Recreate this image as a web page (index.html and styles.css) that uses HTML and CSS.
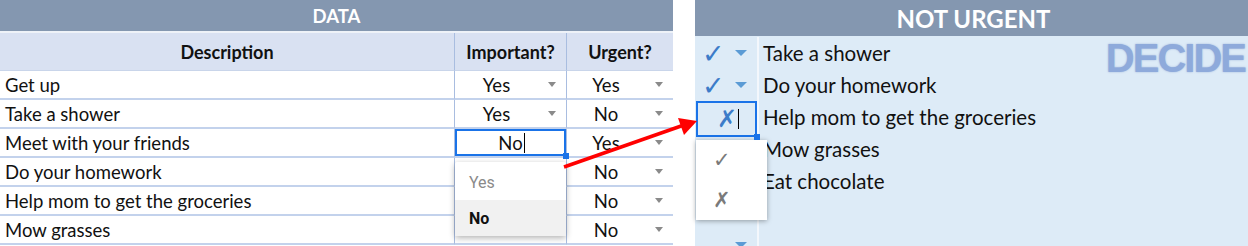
FILE: index.html
```html
<!DOCTYPE html>
<html lang="en">
<head>
  <meta charset="UTF-8">
  <title>Eisenhower matrix - data entry</title>
  <meta name="viewport" content="width=device-width, initial-scale=1.0">
  <link rel="stylesheet" href="styles.css">
</head>
<body>
  <div class="page">
    <section class="sheet">
      <div class="sheet-title">DATA</div>
      <div class="grid">
        <div class="head">Description</div>
        <div class="head">Important?</div>
        <div class="head">Urgent?</div>

        <div class="desc">Get up</div>
        <div class="pick"><span class="val">Yes</span><i class="tri"></i></div>
        <div class="pick"><span class="val">Yes</span><i class="tri"></i></div>

        <div class="desc">Take a shower</div>
        <div class="pick"><span class="val">Yes</span><i class="tri"></i></div>
        <div class="pick"><span class="val">No</span><i class="tri"></i></div>

        <div class="desc">Meet with your friends</div>
        <div class="pick editing">
          <span>No</span><span class="caret"></span>
          <div class="menu">
            <div class="muted">Yes</div>
            <div class="active">No</div>
          </div>
        </div>
        <div class="pick"><span class="val">Yes</span><i class="tri"></i></div>

        <!-- important cells below are hidden under the open menu -->
        <div class="desc">Do your homework</div>
        <div class="pick"></div>
        <div class="pick"><span class="val">No</span><i class="tri"></i></div>

        <div class="desc">Help mom to get the groceries</div>
        <div class="pick"></div>
        <div class="pick"><span class="val">No</span><i class="tri"></i></div>

        <div class="desc">Mow grasses</div>
        <div class="pick"></div>
        <div class="pick"><span class="val">No</span><i class="tri"></i></div>
      </div>
    </section>

    <section class="board">
      <div class="board-title">NOT URGENT</div>
      <div class="board-body">
        <div class="stamp">DECIDE</div>

        <div class="mark"><span class="glyph">✓</span><i class="tri"></i></div>
        <div class="item">Take a shower</div>

        <div class="mark"><span class="glyph">✓</span><i class="tri"></i></div>
        <div class="item">Do your homework</div>

        <div class="mark editing">
          <div class="editor"><span>✗</span><span class="caret"></span></div>
          <div class="menu">
            <div>✓</div>
            <div>✗</div>
          </div>
        </div>
        <div class="item">Help mom to get the groceries</div>

        <div class="mark"></div>
        <div class="item">Mow grasses</div>

        <div class="mark"></div>
        <div class="item">Eat chocolate</div>

        <div class="mark"></div>
        <div class="item"></div>

        <div class="mark"><span class="glyph"></span><i class="tri"></i></div>
        <div class="item"></div>
      </div>
    </section>

    <svg class="pointer" width="1248" height="246" viewBox="0 0 1248 246">
      <line x1="564" y1="167" x2="684" y2="125" stroke="#ff0000" stroke-width="3.5"/>
      <polygon points="697,121 678,118 684,135" fill="#ff0000"/>
    </svg>
  </div>
</body>
</html>
```

FILE: styles.css
```css
:root {
  --head: #8497b0;
  --band: #d9e1f2;
  --line: #c3d2ec;
  --col: #a9bde0;
  --board: #ddebf7;
  --edit: #1a73e8;
  --mark: #3c7cc9;
}

body {
  margin: 0;
  font-family: Lato, "Open Sans", sans-serif;
  color: #111;
  background: #fff;
}
.page {
  display: flex;
  gap: 22px;
  height: 246px;
  overflow: hidden;
  position: relative;
}

/* left: data sheet */
.sheet {
  width: 673px;
}
.sheet-title {
  height: 31px;
  background: var(--head); color: #fff;
  border-bottom: 2px solid #eef2f8;
  font-weight: 700;
  font-size: 18.5px;
  display: flex;
  align-items: center;
  justify-content: center;
}
.grid {
  display: grid;
  grid-template-columns: 454px 112px 107px;
}
.grid > div {
  box-sizing: border-box;
  height: 29px;
  border-bottom: 2px solid var(--line);
  display: flex;
  align-items: center;
  font-size: 18.5px;
}
.grid > .head {
  height: 38px;
  background: var(--band);
  border-bottom: 1px solid #c9d5ea;
  font-weight: 700;
  font-size: 18px;
  justify-content: center;
}
.grid > .head + .head,
.pick {
  border-left: 1px solid var(--col);
}
.desc {
  padding-left: 5px;
}
.pick .val {
  flex: 1;
  text-align: center;
  padding-right: 10px;
}
.tri {
  width: 0; height: 0;
  border-left: 4px solid transparent;
  border-right: 4px solid transparent;
  border-top: 5px solid #8a8a8a;
  margin-right: 10px;
}
.caret {
  width: 0;
  height: 20px;
  border-left: 1.5px solid #000;
  margin-left: 1px;
}
.pick.editing {
  position: relative;
  justify-content: center;
  box-shadow: inset 0 0 0 2px var(--edit);
  padding-left: 2px;
}
.editing::after {
  content: "";
  position: absolute;
  right: -3px; bottom: -3px;
  width: 6px; height: 6px;
  background: var(--edit);
  z-index: 6;
}
.pick .menu {
  position: absolute;
  top: 33px; left: 0;
  width: 111px;
  padding-top: 2px;
  background: #fff;
  border-radius: 2px;
  box-shadow: 0 2px 6px rgba(0,0,0,0.3);
  font-family: Roboto, "Liberation Sans", sans-serif;
  font-size: 16px;
  z-index: 5;
}
.pick .menu div {
  height: 36px;
  display: flex;
  align-items: center;
  padding-left: 14px;
}
.menu .muted {
  color: #8a8a8a;
}
.menu .active {
  background: #f1f1f1;
  font-weight: 700;
}

/* right: quadrant board */
.board {
  flex: 1;
  display: flex;
  flex-direction: column;
  min-height: 0;
}
.board-title {
  flex-shrink: 0;
  height: 36px;
  background: var(--head); color: #fff;
  font-weight: 700;
  font-size: 24px;
  display: flex;
  align-items: center;
  justify-content: center;
  padding-left: 4px;
}
.board-body {
  flex: 1;
  min-height: 0;
  position: relative;
  background: var(--board);
  padding-top: 1px;
  display: grid;
  grid-template-columns: 62px 1fr;
  grid-auto-rows: 32px;
}
.mark {
  display: flex;
  align-items: center;
  padding-left: 7px;
}
.mark .glyph {
  width: 33px;
  color: var(--mark);
  font-family: "DejaVu Sans", sans-serif;
  font-size: 27px;
  line-height: 1;
}
.mark .tri {
  border-left-width: 6px;
  border-right-width: 6px;
  border-top: 6px solid #5b9bd5;
}
.item {
  border-left: 2px solid #f3f7fc;
  padding-left: 4px;
  display: flex;
  align-items: center;
  font-size: 20.5px;
}
.mark.editing {
  position: relative;
}
.editor {
  position: absolute;
  left: 1px; top: 0;
  width: 61px; height: 36px;
  box-sizing: border-box;
  box-shadow: inset 0 0 0 2px var(--edit);
  display: flex;
  align-items: center;
  justify-content: center;
  padding-left: 3px;
  color: var(--mark);
  font-family: "DejaVu Sans", sans-serif;
  font-size: 24px;
}
.mark.editing::after {
  right: -3px; bottom: auto; top: 33px;
}
.mark .menu {
  position: absolute;
  top: 39px; left: 1px;
  width: 71px;
  background: #fff;
  box-shadow: 0 1px 5px rgba(0,0,0,0.35);
  font-family: "DejaVu Sans", sans-serif;
  font-size: 21px;
  color: #7a7a7a;
  z-index: 5;
}
.mark .menu div {
  height: 40px;
  display: flex;
  align-items: center;
  padding-left: 17px;
}
.stamp {
  position: absolute;
  top: 2px; right: 3px;
  font-family: "Liberation Sans", Arial, sans-serif;
  font-weight: 700;
  font-size: 40px;
  line-height: 1;
  letter-spacing: -2px;
  color: #8eaadb;
  text-shadow: 0 0 2px rgba(110,140,200,0.6);
}

/* annotation arrow */
.pointer {
  position: absolute;
  left: 0; top: 0;
  pointer-events: none;
  z-index: 10;
}
```
